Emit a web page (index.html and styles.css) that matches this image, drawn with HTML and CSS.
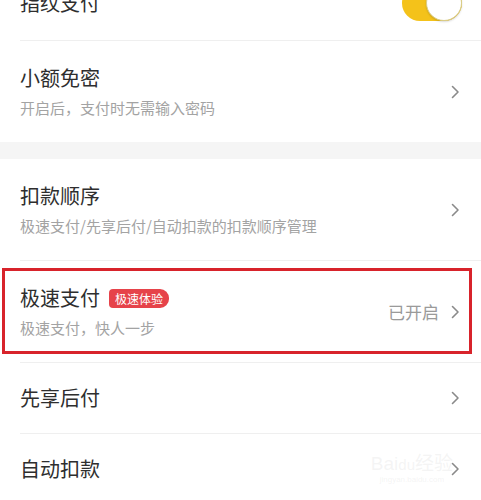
FILE: index.html
```html
<!DOCTYPE html>
<html lang="zh-CN">
<head>
<meta charset="utf-8">
<link rel="stylesheet" href="styles.css">
</head>
<body>
<div class="page">
  <div class="row row-first">
    <div class="title">指纹支付</div>
    <div class="toggle"><span class="knob"></span></div>
  </div>
  <div class="divider"></div>
  <div class="row row-two">
    <div class="texts">
      <div class="title">小额免密</div>
      <div class="sub">开启后，支付时无需输入密码</div>
    </div>
    <svg class="chev" width="9" height="14" viewBox="0 0 9 14"><polyline points="1.5,1.5 7,7 1.5,12.5" fill="none" stroke="#8a8a8a" stroke-width="1.6" stroke-linecap="round" stroke-linejoin="round"/></svg>
  </div>
  <div class="band"></div>
  <div class="row row-two">
    <div class="texts">
      <div class="title">扣款顺序</div>
      <div class="sub">极速支付/先享后付/自动扣款的扣款顺序管理</div>
    </div>
    <svg class="chev" width="9" height="14" viewBox="0 0 9 14"><polyline points="1.5,1.5 7,7 1.5,12.5" fill="none" stroke="#8a8a8a" stroke-width="1.6" stroke-linecap="round" stroke-linejoin="round"/></svg>
  </div>
  <div class="divider"></div>
  <div class="row row-two row-marked">
    <div class="texts">
      <div class="title-line">
        <span class="title">极速支付</span>
        <span class="badge">极速体验</span>
      </div>
      <div class="sub">极速支付，快人一步</div>
    </div>
    <div class="right">
      <span class="status">已开启</span>
      <svg class="chev" width="9" height="14" viewBox="0 0 9 14"><polyline points="1.5,1.5 7,7 1.5,12.5" fill="none" stroke="#8a8a8a" stroke-width="1.6" stroke-linecap="round" stroke-linejoin="round"/></svg>
    </div>
    <div class="mark"></div>
  </div>
  <div class="divider"></div>
  <div class="row row-one">
    <div class="title">先享后付</div>
    <svg class="chev" width="9" height="14" viewBox="0 0 9 14"><polyline points="1.5,1.5 7,7 1.5,12.5" fill="none" stroke="#8a8a8a" stroke-width="1.6" stroke-linecap="round" stroke-linejoin="round"/></svg>
  </div>
  <div class="divider"></div>
  <div class="row row-one">
    <div class="title">自动扣款</div>
    <svg class="chev" width="9" height="14" viewBox="0 0 9 14"><polyline points="1.5,1.5 7,7 1.5,12.5" fill="none" stroke="#8a8a8a" stroke-width="1.6" stroke-linecap="round" stroke-linejoin="round"/></svg>
    <div class="watermark">Bai<span class="paw">du</span>经验<div class="wm-url">jingyan.baidu.com</div></div>
  </div>
</div>
</body>
</html>
```

FILE: styles.css
```css
html, body {
  margin: 0;
  padding: 0;
  background: #ffffff;
}
body {
  font-family: "Noto Sans CJK SC", "Noto Sans", sans-serif;
  color: #2e2e2e;
  overflow: hidden;
}
.page {
  margin-top: -34px;
  width: 481px;
}
.row {
  display: flex;
  align-items: center;
  justify-content: space-between;
  padding: 0 21px 0 20px;
  box-sizing: border-box;
  position: relative;
  background: #fff;
}
.row-first {
  height: 74px;
}
.row-two {
  height: 101px;
}
.row-one {
  height: 70px;
}
.title {
  font-size: 20px;
  line-height: 20px;
  color: #2e2e2e;
}
.texts {
  display: flex;
  flex-direction: column;
  gap: 12px;
}
.title-line {
  display: flex;
  align-items: center;
  height: 20px;
}
.sub {
  font-size: 15px;
  line-height: 15px;
  color: #a3a3a3;
}
.badge {
  margin-left: 9px;
  background: #e6434a;
  color: #fff;
  font-size: 12px;
  line-height: 19px;
  height: 19px;
  padding: 0 6px;
  border-radius: 4px 9px 9px 4px;
}
.right {
  display: flex;
  align-items: center;
  gap: 12px;
}
.status {
  font-size: 17px;
  line-height: 17px;
  color: #9a9a9a;
}
.chev {
  display: block;
  flex: none;
}
.divider {
  height: 1px;
  margin-left: 20px;
  background: #efefef;
}
.band {
  height: 17px;
  background: #f5f5f5;
}
.toggle {
  width: 60px;
  height: 36px;
  border-radius: 18px;
  background: #f4c21a;
  display: flex;
  justify-content: flex-end;
  margin-right: -2px;
}
.knob {
  width: 36px;
  height: 36px;
  border-radius: 50%;
  background: #fff;
  box-sizing: border-box;
  border: 1px solid #d9cd8a;
  box-shadow: 0 1px 2px rgba(0,0,0,0.15);
}
.mark {
  position: absolute;
  left: 2px;
  right: 9px;
  top: 7px;
  bottom: 8px;
  border: 3px solid #d8232b;
  pointer-events: none;
}
.watermark {
  position: absolute;
  right: 28px;
  top: 20px;
  font-family: "Liberation Sans", sans-serif;
  font-size: 19px;
  line-height: 20px;
  color: rgba(205,205,205,0.22);
  text-align: center;
}
.paw {
  font-size: 15px;
}
.wm-url {
  font-size: 8px;
  line-height: 10px;
}
```
